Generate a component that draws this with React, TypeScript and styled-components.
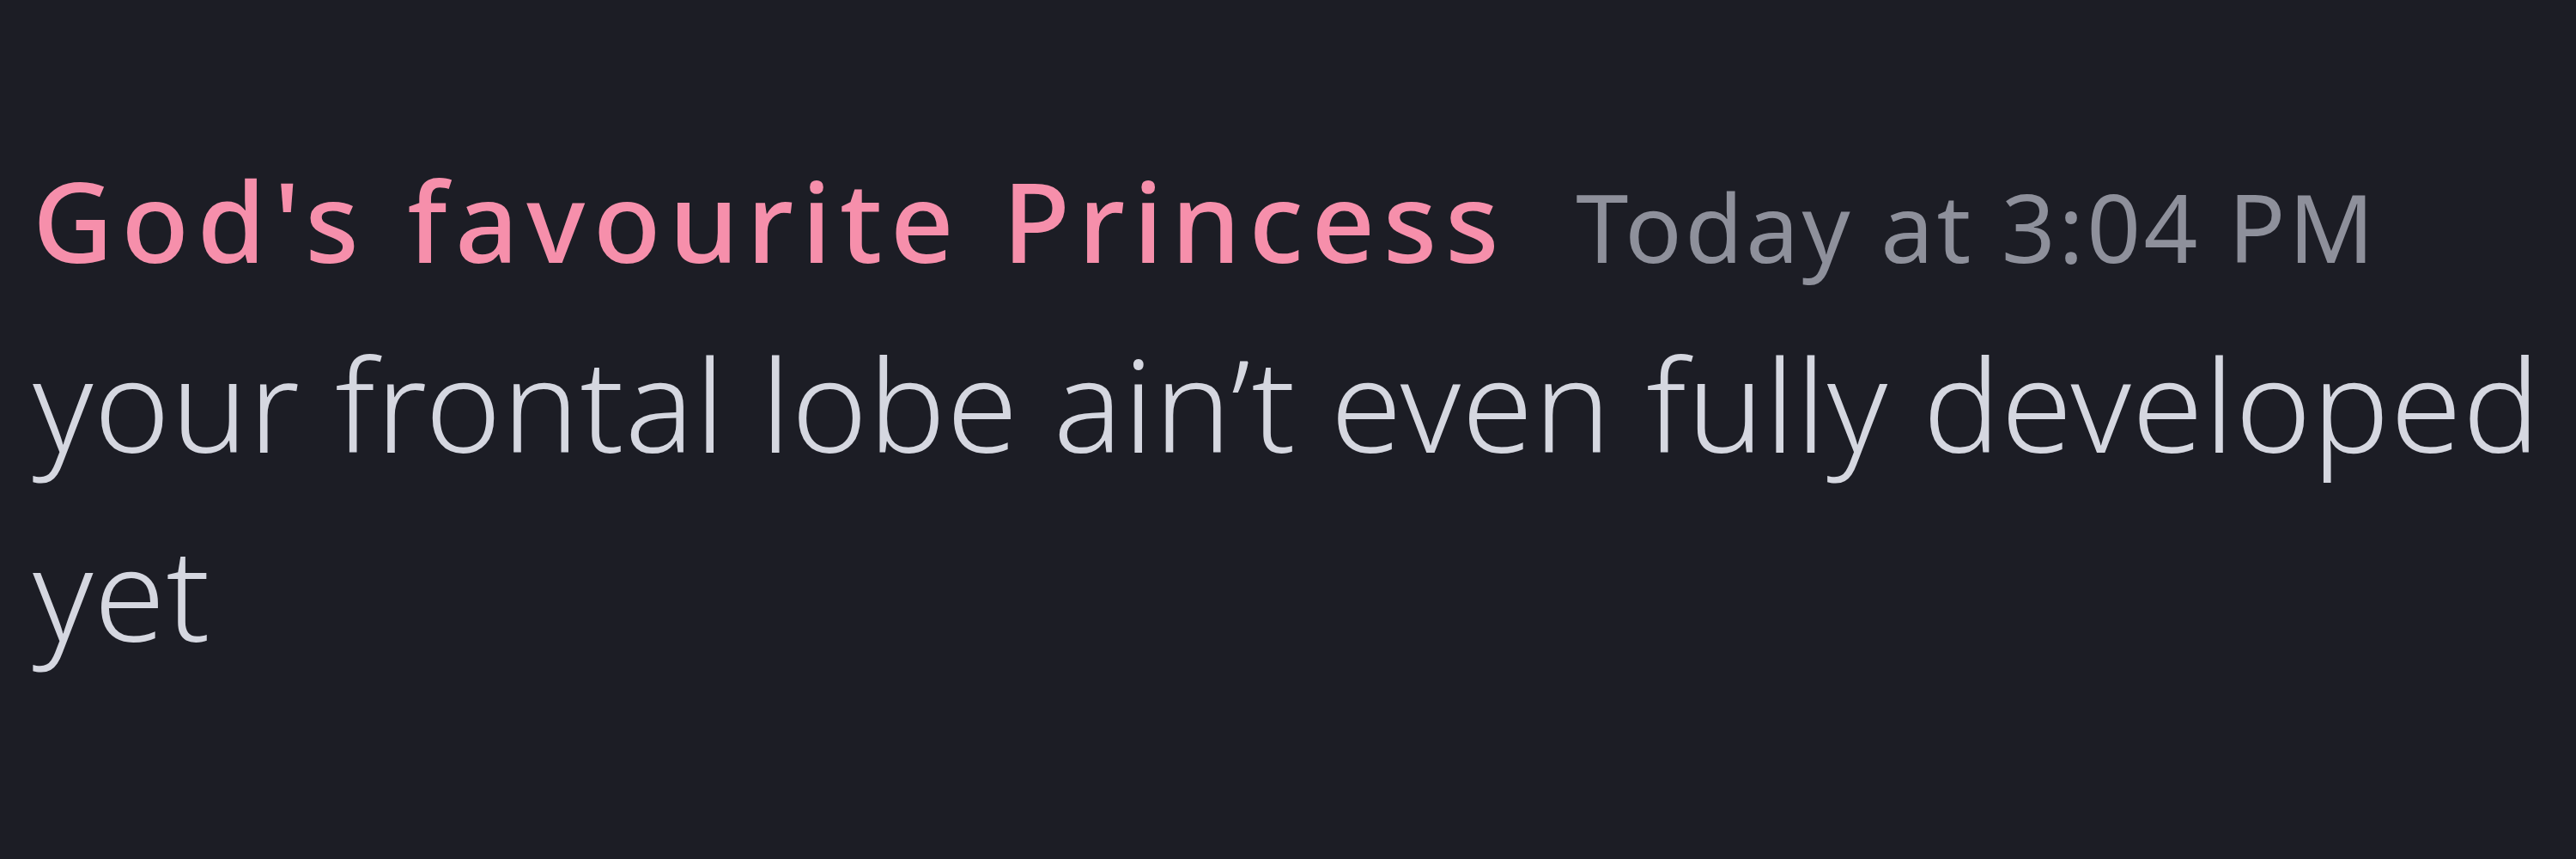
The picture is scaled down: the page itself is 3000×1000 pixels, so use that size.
import React from "react";
import styled, { createGlobalStyle } from "styled-components";

const Global = createGlobalStyle`
  html, body {
    margin: 0;
    padding: 0;
    background: #1c1d25;
  }
  body {
    width: 3000px;
    height: 1000px;
    overflow: hidden;
  }
`;

const Page = styled.div`
  width: 3000px;
  height: 1000px;
  box-sizing: border-box;
  background: #1c1d25;
  padding: 146px 0 0 38px;
  font-family: "Noto Sans", "Open Sans", sans-serif;
  overflow: hidden;
`;

const Message = styled.article`
  display: flex;
  flex-direction: column;
  width: 2980px;
`;

const Header = styled.div`
  display: flex;
  align-items: baseline;
  gap: 80px;
  line-height: 220px;
  white-space: nowrap;
`;

const Username = styled.span`
  color: #f68fab;
  font-size: 129px;
  font-weight: 550;
  letter-spacing: 9.5px;
  word-spacing: 4px;
`;

const Timestamp = styled.time`
  color: #8e909b;
  font-size: 110px;
  font-weight: 400;
  letter-spacing: 3.5px;
`;

const Body = styled.div`
  color: #d5d7e0;
  font-size: 150px;
  font-weight: 300;
  letter-spacing: 1.2px;
  line-height: 220px;
  margin-top: -14px;
`;

export default function App() {
  return (
    <>
      <Global />
      <Page>
        <Message>
          <Header>
            <Username>God's favourite Princess</Username>
            <Timestamp>Today at 3:04 PM</Timestamp>
          </Header>
          <Body>your frontal lobe ain’t even fully developed yet</Body>
        </Message>
      </Page>
    </>
  );
}
